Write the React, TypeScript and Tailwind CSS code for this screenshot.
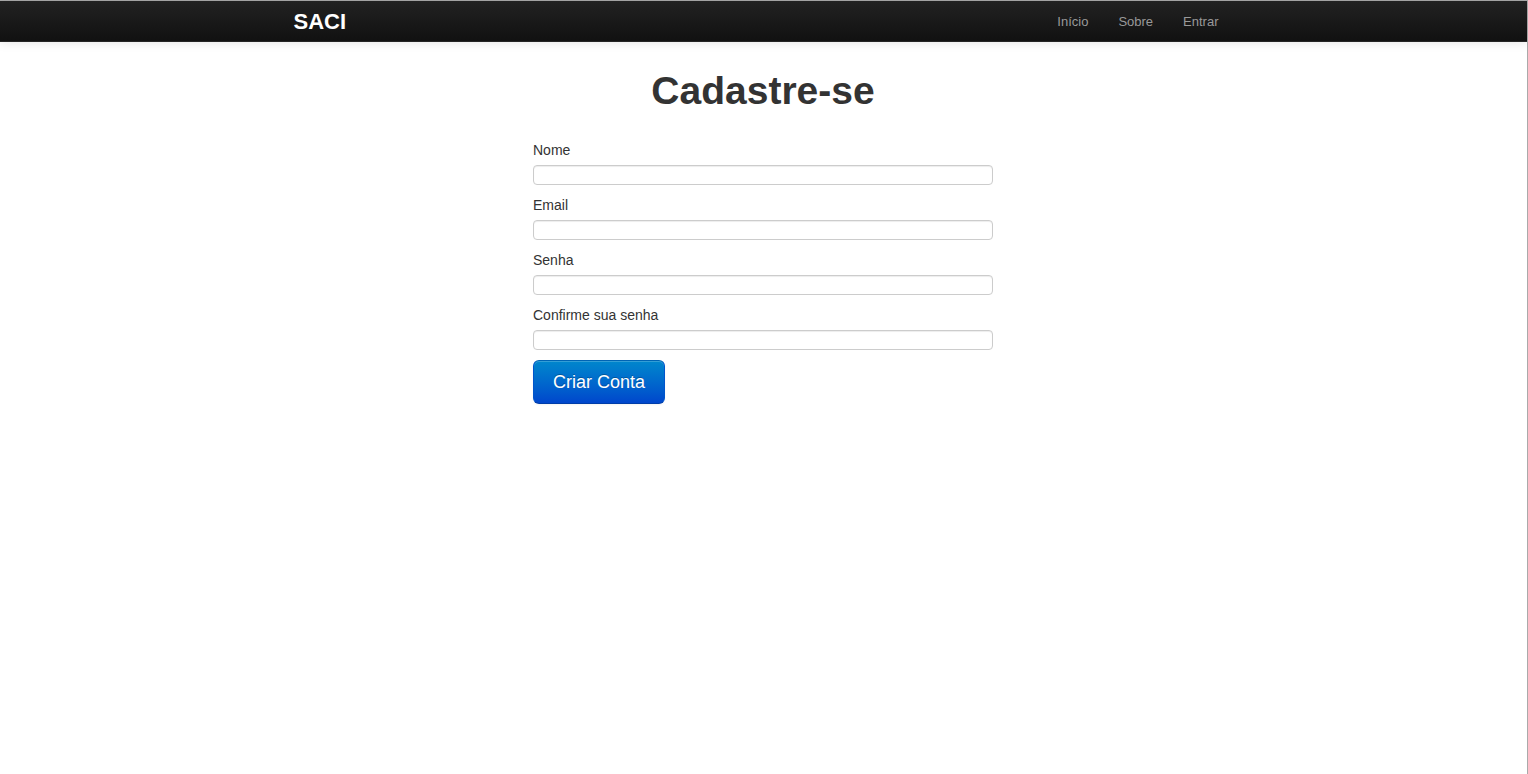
const links = ['Início', 'Sobre', 'Entrar'];

const fields = [
  { id: 'name', label: 'Nome', type: 'text' },
  { id: 'email', label: 'Email', type: 'text' },
  { id: 'password', label: 'Senha', type: 'password' },
  { id: 'confirmation', label: 'Confirme sua senha', type: 'password' },
];

function Navbar() {
  return (
    <header className="border-b border-[#252525] bg-linear-to-b from-[#222222] to-[#111111] shadow-[0_1px_10px_rgba(0,0,0,0.1)]">
      <div className="mx-auto flex h-10 max-w-[940px] items-center justify-between pt-0.5">
        <a href="#" className="text-[22px] leading-5 font-bold text-white">
          SACI
        </a>
        <nav className="flex">
          {links.map((link) => (
            <a key={link} href="#" className="px-[15px] text-[13px] leading-5 text-[#999999] hover:text-white">
              {link}
            </a>
          ))}
        </nav>
      </div>
    </header>
  );
}

export default function App() {
  return (
    <div className="min-h-screen border-t border-r border-[#aaaaaa] bg-white font-['Liberation_Sans',Arial,sans-serif] text-sm text-[#333333]">
      <Navbar />
      <main className="pt-[29px] pr-[17px] pl-4">
        <h1 className="text-center text-[39px] leading-10 font-bold">Cadastre-se</h1>
        <form className="mx-auto mt-[29px] flex max-w-[460px] flex-col items-start gap-2.5">
          {fields.map((field) => (
            <div key={field.id} className="flex w-full flex-col gap-[5px]">
              <label htmlFor={field.id} className="self-start leading-5">
                {field.label}
              </label>
              <input
                id={field.id}
                type={field.type}
                className="h-5 w-full rounded border border-[#cccccc] bg-white px-1.5 text-[13px] shadow-[inset_0_1px_1px_rgba(0,0,0,0.075)] outline-none focus:border-[#52a8ec]"
              />
            </div>
          ))}
          <button
            type="button"
            className="h-11 rounded-md border border-[#0055cc] border-t-[#0064b4] border-b-[#003da8] bg-linear-to-b from-[#0088cc] to-[#0044cc] bg-origin-border px-[19px] text-lg leading-5 text-white shadow-[inset_0_1px_0_rgba(255,255,255,0.2),0_1px_2px_rgba(0,0,0,0.05)] text-shadow-[0_-1px_0_rgba(0,0,0,0.25)]"
          >
            Criar Conta
          </button>
        </form>
      </main>
    </div>
  );
}
